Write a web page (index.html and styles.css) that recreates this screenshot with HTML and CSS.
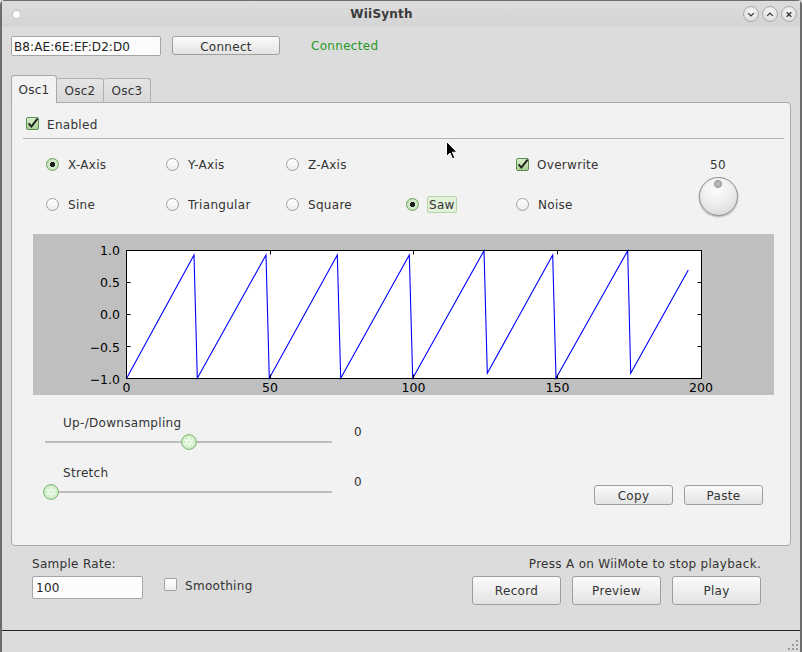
FILE: index.html
```html
<!DOCTYPE html>
<html>
<head>
<meta charset="utf-8">
<title>WiiSynth</title>
<link rel="stylesheet" href="styles.css">
</head>
<body>
<div class="window">
  <div class="titlebar">
    <span class="tb-dot"></span>
    <span class="tb-title">WiiSynth</span>
    <div class="tb-buttons">
      <span class="tb-btn"><svg width="15" height="15" viewBox="0 0 15 15"><path d="M4.5 6 L7.5 9 L10.5 6" fill="none" stroke="#333" stroke-width="1.4"/></svg></span>
      <span class="tb-btn"><svg width="15" height="15" viewBox="0 0 15 15"><path d="M4.5 9 L7.5 6 L10.5 9" fill="none" stroke="#333" stroke-width="1.4"/></svg></span>
      <span class="tb-btn"><svg width="15" height="15" viewBox="0 0 15 15"><path d="M5 5 L10 10 M10 5 L5 10" fill="none" stroke="#333" stroke-width="1.4"/></svg></span>
    </div>
  </div>

  <div class="toprow">
    <div class="field addr">B8:AE:6E:EF:D2:D0</div>
    <div class="btn connect">Connect</div>
    <div class="status">Connected</div>
  </div>

  <div class="tabs">
    <div class="tab active">Osc1</div>
    <div class="tab">Osc2</div>
    <div class="tab">Osc3</div>
  </div>

  <div class="panel">
    <div class="enabled-row">
      <span class="check on"><svg width="13" height="13" viewBox="0 0 13 13"><path d="M2.6 6.4 L5.4 9.6 L11.6 1.6" fill="none" stroke="#1d1d1d" stroke-width="1.9"/></svg></span>
      <span class="txt">Enabled</span>
    </div>
    <div class="sep"></div>

    <div class="options">
      <div class="opt"><span class="radio on"></span><span class="txt">X-Axis</span></div>
      <div class="opt"><span class="radio"></span><span class="txt">Y-Axis</span></div>
      <div class="opt"><span class="radio"></span><span class="txt">Z-Axis</span></div>
      <div class="opt"></div>
      <div class="opt"><span class="check on"><svg width="13" height="13" viewBox="0 0 13 13"><path d="M2.6 6.4 L5.4 9.6 L11.6 1.6" fill="none" stroke="#1d1d1d" stroke-width="1.9"/></svg></span><span class="txt">Overwrite</span></div>
      <div class="knob-col">
        <div class="knob-val">50</div>
        <div class="knob"><span class="knob-dot"></span></div>
      </div>
      <div class="opt"><span class="radio"></span><span class="txt">Sine</span></div>
      <div class="opt"><span class="radio"></span><span class="txt">Triangular</span></div>
      <div class="opt"><span class="radio"></span><span class="txt">Square</span></div>
      <div class="opt"><span class="radio on saw-radio"></span><span class="focus">Saw</span></div>
      <div class="opt"><span class="radio"></span><span class="txt">Noise</span></div>
    </div>

    <div class="plot">
      <svg width="741" height="161" viewBox="0 0 741 161">
        <rect x="0" y="0" width="741" height="161" fill="#bfbfbf"/>
        <rect x="93.5" y="16.5" width="575" height="128" fill="#ffffff"/>
        <polyline fill="none" stroke="#0000ff" stroke-width="1.1" points="93.5,144.5 161,21 164.3,144.3 233,21 236.3,144.3 304.3,21 307.7,144.3 376.3,21 379.7,144.3 451,16.7 454.3,139.3 519.7,21 523,144.3 594.7,16.7 597.7,139.3 655.3,36"/>
        <rect x="93.5" y="16.5" width="575" height="128" fill="none" stroke="#000" stroke-width="1"/>
        <g stroke="#000" stroke-width="1">
          <path d="M93.5 48.5 H97.5 M93.5 80.5 H97.5 M93.5 112.5 H97.5"/>
          <path d="M668.5 48.5 H664.5 M668.5 80.5 H664.5 M668.5 112.5 H664.5"/>
          <path d="M237.5 16.5 V20.5 M380.5 16.5 V20.5 M524.5 16.5 V20.5"/>
          <path d="M237.5 144.5 V140.5 M380.5 144.5 V140.5 M524.5 144.5 V140.5"/>
        </g>
        <g class="axis-text" text-anchor="end">
          <text x="87" y="21">1.0</text>
          <text x="87" y="53">0.5</text>
          <text x="87" y="85">0.0</text>
          <text x="87" y="117.5">−0.5</text>
          <text x="87" y="149.5">−1.0</text>
        </g>
        <g class="axis-text" text-anchor="middle">
          <text x="93.5" y="158">0</text>
          <text x="237" y="158">50</text>
          <text x="380.5" y="158">100</text>
          <text x="524.5" y="158">150</text>
          <text x="668" y="158">200</text>
        </g>
      </svg>
    </div>

    <div class="slider-row first">
      <div class="slider-col">
        <div class="slider-label">Up-/Downsampling</div>
        <div class="track"><span class="groove"></span><span class="thumb" style="left:136px"><svg width="16" height="16" viewBox="0 0 16 16"><circle cx="8" cy="8" r="7.4" fill="#d2efca" stroke="#77b56e" stroke-width="1"/><g stroke="#ffffff" stroke-width="1.3"><path d="M8 3.2 V12.8 M3.9 5.6 L12.1 10.4 M3.9 10.4 L12.1 5.6"/></g><circle cx="8" cy="8" r="1.6" fill="#d2efca"/></svg></span></div>
      </div>
      <div class="slider-val">0</div>
    </div>

    <div class="slider-row second">
      <div class="slider-col">
        <div class="slider-label">Stretch</div>
        <div class="track"><span class="groove"></span><span class="thumb" style="left:-2px"><svg width="16" height="16" viewBox="0 0 16 16"><circle cx="8" cy="8" r="7.4" fill="#d2efca" stroke="#77b56e" stroke-width="1"/><g stroke="#ffffff" stroke-width="1.3"><path d="M8 3.2 V12.8 M3.9 5.6 L12.1 10.4 M3.9 10.4 L12.1 5.6"/></g><circle cx="8" cy="8" r="1.6" fill="#d2efca"/></svg></span></div>
      </div>
      <div class="slider-val">0</div>
      <div class="copy-paste">
        <div class="btn small">Copy</div>
        <div class="btn small">Paste</div>
      </div>
    </div>
  </div>

  <div class="bottom">
    <div class="bottom-left">
      <div class="label-line">Sample Rate:</div>
      <div class="rate-row">
        <div class="field rate">100</div>
        <div class="smooth"><span class="check"></span><span class="txt">Smoothing</span></div>
      </div>
    </div>
    <div class="bottom-right">
      <div class="label-line hint">Press A on WiiMote to stop playback.</div>
      <div class="play-row">
        <div class="btn big">Record</div>
        <div class="btn big">Preview</div>
        <div class="btn big">Play</div>
      </div>
    </div>
  </div>

  <div class="statusbar">
    <svg class="grip" width="12" height="12" viewBox="0 0 12 12">
      <g fill="#9a9a9a">
        <rect x="9" y="1" width="2" height="2"/>
        <rect x="5" y="5" width="2" height="2"/><rect x="9" y="5" width="2" height="2"/>
        <rect x="1" y="9" width="2" height="2"/><rect x="5" y="9" width="2" height="2"/><rect x="9" y="9" width="2" height="2"/>
      </g>
    </svg>
  </div>

  <svg class="cursor" width="12" height="19" viewBox="0 0 12 19">
    <path d="M0.5 0.5 L0.5 15.5 L4 12 L6.5 17.8 L8.8 16.8 L6.4 11.2 L11 11.2 Z" fill="#000" stroke="#fff" stroke-width="1"/>
  </svg>
</div>
</body>
</html>
```

FILE: styles.css
```css
* { box-sizing: border-box; }
html, body { margin: 0; padding: 0; }
body {
  width: 802px;
  height: 652px;
  overflow: hidden;
  background: #dcdcdc;
  font-family: "DejaVu Sans", "Noto Sans", sans-serif;
  font-size: 12px;
  letter-spacing: 0.3px;
  color: #333;
}

.window {
  position: relative;
  width: 802px;
  height: 652px;
  display: flex;
  flex-direction: column;
  background: #dcdcdc;
  border-left: 2px solid #6c6c6c;
  border-right: 2px solid #6c6c6c;
  border-top: 1px solid #6c6c6c;
  border-top-left-radius: 5px;
  border-top-right-radius: 5px;
}

/* Title bar */
.titlebar {
  height: 26px;
  display: flex;
  align-items: center;
  background: linear-gradient(#dcdcdc, #d4d4d4);
  flex-shrink: 0;
}
.tb-dot {
  width: 7px;
  height: 7px;
  margin-left: 11px;
  border-radius: 50%;
  background: #fdfdfd;
  box-shadow: 0 0 1px 1px #c4c4c4;
}
.tb-title {
  flex: 1;
  text-align: center;
  font-weight: bold;
  color: #3a3a3a;
  font-size: 12px;
  letter-spacing: 0.2px;
}
.tb-buttons {
  display: flex;
  gap: 3px;
  margin-right: 3px;
}
.tb-btn {
  width: 16px;
  height: 16px;
  border-radius: 50%;
  border: 1px solid #a9a9a9;
  background: radial-gradient(circle at 50% 35%, #f6f6f6, #d8d8d8);
  display: flex;
  align-items: center;
  justify-content: center;
}
.tb-btn svg { display: block; }

.txt { padding-top: 2px; }

/* Common widgets */
.field {
  background: #fcfcfc;
  border: 1px solid #a5a5a5;
  border-radius: 2px;
  color: #222;
  display: flex;
  align-items: center;
  padding-top: 1px;
}
.btn {
  display: flex;
  align-items: center;
  justify-content: center;
  border: 1px solid #9e9e9e;
  border-radius: 3px;
  background: linear-gradient(#fbfbfb, #e3e3e3);
  color: #333;
  padding-top: 1px;
}

/* Top row */
.toprow {
  display: flex;
  align-items: flex-start;
  margin: 9px 0 0 9px;
  height: 20px;
}
.addr {
  width: 150px;
  height: 20px;
  padding-left: 2px;
  letter-spacing: 0.1px;
}
.connect {
  margin-left: 11px;
  width: 108px;
  height: 19px;
  padding-top: 2px;
}
.status {
  margin-left: 31px;
  color: #1f9a1f;
  line-height: 20px;
}

/* Tabs */
.tabs {
  position: relative;
  z-index: 2;
  display: flex;
  align-items: flex-end;
  margin: 19px 0 0 9px;
  height: 27px;
}
.tab {
  width: 47px;
  height: 24px;
  display: flex;
  align-items: center;
  justify-content: center;
  border: 1px solid #b0b0b0;
  border-bottom: none;
  border-left: none;
  border-radius: 3px 3px 0 0;
  background: linear-gradient(#e4e4e4, #d9d9d9);
  color: #333;
  padding-top: 1px;
}
.tab.active {
  width: 46px;
  height: 28px;
  margin-bottom: -1px;
  border-left: 1px solid #aaaaaa;
  border-color: #aaaaaa;
  background: #f2f2f2;
  padding-top: 0;
}

/* Panel */
.panel {
  position: relative;
  z-index: 1;
  margin-left: 9px;
  width: 780px;
  height: 444px;
  background: #f2f2f2;
  border: 1px solid #ababab;
  border-radius: 0 4px 4px 4px;
  display: flex;
  flex-direction: column;
  flex-shrink: 0;
}
.enabled-row {
  display: flex;
  align-items: center;
  height: 13px;
  margin: 14px 0 0 14px;
}
.sep {
  margin: 8px 0 0 11px;
  width: 761px;
  height: 1px;
  background: #b3b3b3;
}

.check {
  width: 13px;
  height: 13px;
  margin-right: 8px;
  flex-shrink: 0;
  border: 1px solid #a2a2a2;
  border-radius: 2px;
  background: linear-gradient(#ffffff, #efefef);
  position: relative;
}
.check.on {
  border-color: #5d8c4f;
  background: linear-gradient(#d9eecd, #a9cf93);
}
.check svg {
  position: absolute;
  left: -1px;
  top: -1px;
  overflow: visible;
}
.radio {
  width: 13px;
  height: 13px;
  margin-right: 9px;
  flex-shrink: 0;
  border-radius: 50%;
  border: 1px solid #a0a0a0;
  background: linear-gradient(#ffffff, #ececec);
}
.radio.on {
  border-color: #6e9f60;
  background: radial-gradient(circle, #1e1e1e 0 2.4px, #d5ecca 2.9px, #b9dca9 100%);
}
.saw-radio { margin-right: 8px; }

.options {
  display: grid;
  grid-template-columns: 120px 120px 120px 110px 160px 84px;
  grid-template-rows: 40px 40px;
  margin: 5px 0 0 34px;
}
.opt {
  display: flex;
  align-items: center;
}
.focus {
  border: 1px solid #b4d6a6;
  background: #e3f1da;
  border-radius: 2px;
  padding: 1px 1px 0 1px;
  line-height: 14px;
  margin-top: 1px;
}
.knob-col {
  grid-column: 6;
  grid-row: 1 / span 2;
  display: flex;
  flex-direction: column;
  align-items: center;
  padding-top: 13px;
}
.knob-val {
  line-height: 16px;
  color: #333;
}
.knob {
  position: relative;
  margin-top: 4px;
  width: 39px;
  height: 39px;
  border-radius: 50%;
  border: 1px solid #8b8b8b;
  background: radial-gradient(circle at 45% 30%, #fdfdfd 0%, #ececec 50%, #cfcfcf 100%);
  box-shadow: 0 1px 2px rgba(0,0,0,0.3);
}
.knob-dot {
  position: absolute;
  left: 14.5px;
  top: 2px;
  width: 8px;
  height: 8px;
  border-radius: 50%;
  background: #b9b9b9;
  border: 1px solid #8c8c8c;
}

/* Plot */
.plot {
  margin: 10px 0 0 21px;
  width: 741px;
  height: 161px;
}
.plot svg { display: block; }
.axis-text {
  font-family: "DejaVu Sans", sans-serif;
  font-size: 12.5px;
  letter-spacing: 0;
  fill: #000;
}

/* Sliders */
.slider-row {
  display: flex;
  align-items: flex-start;
}
.slider-row.first { margin-top: 20px; }
.slider-row.second { margin-top: 14px; }
.slider-col {
  width: 320px;
  padding-left: 33px;
}
.slider-label {
  line-height: 15px;
  padding-left: 18px;
  padding-top: 1px;
  height: 15px;
}
.track {
  position: relative;
  margin-top: 3px;
  width: 287px;
  height: 18px;
}
.groove {
  position: absolute;
  left: 0;
  right: 0;
  top: 8px;
  height: 2px;
  background: #bcbcbc;
}
.thumb {
  position: absolute;
  top: 1px;
  width: 16px;
  height: 16px;
}
.thumb svg { display: block; }
.slider-val {
  margin-left: 22px;
  padding-top: 10px;
  line-height: 15px;
}
.copy-paste {
  margin-left: auto;
  margin-right: 27px;
  margin-top: 20px;
  display: flex;
  gap: 11px;
}
.btn.small {
  width: 79px;
  height: 20px;
}

/* Bottom */
.bottom {
  display: flex;
  justify-content: space-between;
  margin: 10px 39px 0 30px;
}
.label-line {
  line-height: 15px;
  padding-top: 1px;
  height: 15px;
}
.rate-row {
  display: flex;
  align-items: flex-start;
  margin-top: 5px;
}
.rate {
  width: 111px;
  height: 23px;
  padding-left: 3px;
}
.smooth {
  display: flex;
  align-items: center;
  height: 13px;
  margin: 2px 0 0 21px;
}
.bottom-right {
  display: flex;
  flex-direction: column;
  align-items: flex-end;
}
.play-row {
  display: flex;
  gap: 11px;
  margin-top: 5px;
}
.btn.big {
  width: 89px;
  height: 29px;
}

/* Status bar */
.statusbar {
  margin-top: auto;
  height: 22px;
  border-top: 1px solid #262626;
  display: flex;
  justify-content: flex-end;
  align-items: flex-end;
}
.grip {
  display: block;
  margin: 0 1px 1px 0;
}

.cursor {
  position: absolute;
  left: 444px;
  top: 140px;
  z-index: 5;
}
```
